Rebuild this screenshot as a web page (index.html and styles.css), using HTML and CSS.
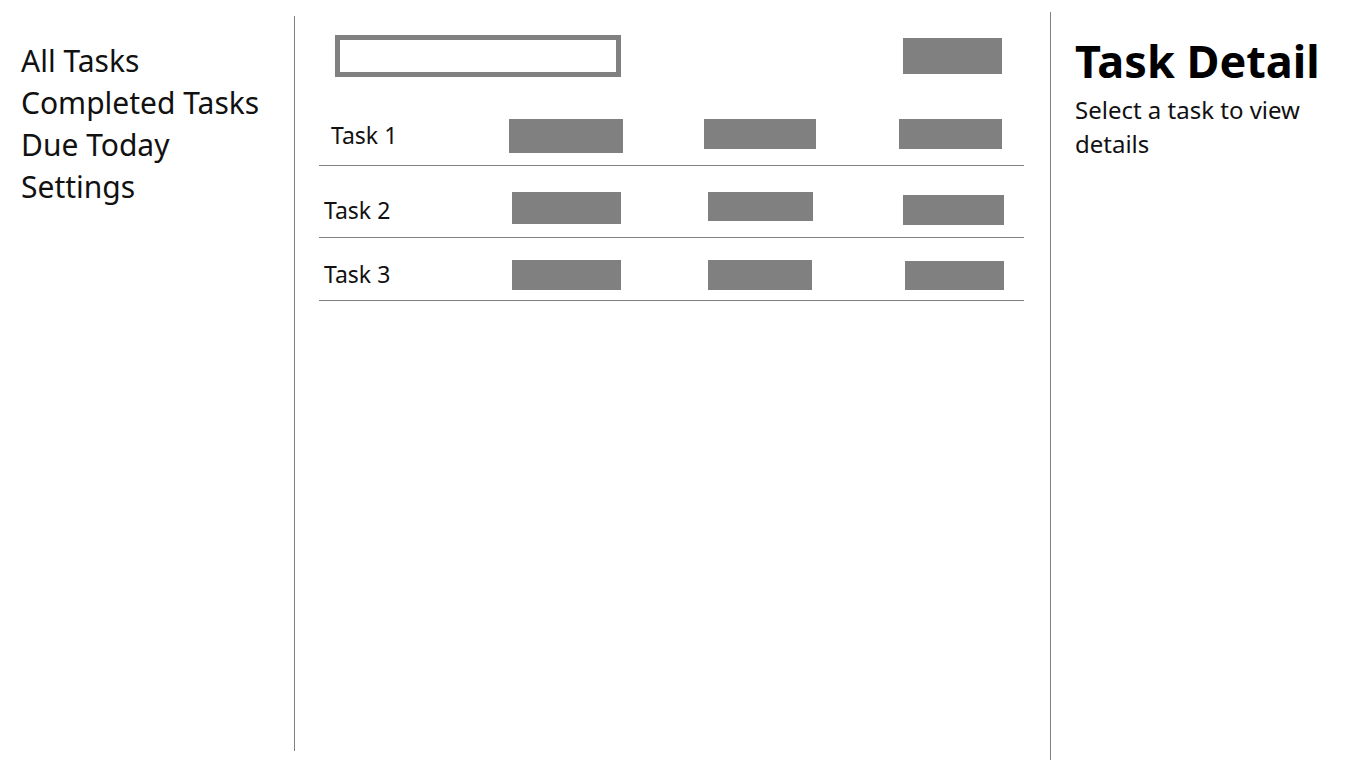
FILE: index.html
```html
<!DOCTYPE html>
<html lang="en">
  <head>
    <meta charset="UTF-8" />
    <meta name="viewport" content="width=device-width, initial-scale=1.0" />
    <title>Tasks</title>
    <link rel="stylesheet" href="styles.css">
  </head>
  <body>
    <div class="app">
      <!-- Navegación lateral -->
      <nav class="sidebar">
        <ul class="nav-list">
          <li>All Tasks</li>
          <li>Completed Tasks</li>
          <li>Due Today</li>
          <li>Settings</li>
        </ul>
      </nav>

      <!-- Lista de tareas -->
      <main class="task-list">
        <div class="toolbar">
          <input type="text" class="search" />
          <button class="add-btn"></button>
        </div>

        <div class="rows">
          <div class="task-row row-1">
            <span class="task-name">Task 1</span>
            <span class="bar bar-a"></span>
            <span class="bar bar-b"></span>
            <span class="bar bar-c"></span>
          </div>
          <div class="task-row row-2">
            <span class="task-name">Task 2</span>
            <span class="bar bar-a"></span>
            <span class="bar bar-b"></span>
            <span class="bar bar-c"></span>
          </div>
          <div class="task-row row-3">
            <span class="task-name">Task 3</span>
            <span class="bar bar-a"></span>
            <span class="bar bar-b"></span>
            <span class="bar bar-c"></span>
          </div>
        </div>
      </main>

      <!-- Detalle de la tarea -->
      <aside class="detail">
        <h1>Task Detail</h1>
        <p>Select a task to view details</p>
      </aside>
    </div>
  </body>
</html>
```

FILE: styles.css
```css
* {
  margin: 0;
  padding: 0;
  box-sizing: border-box;
}

body {
  font-family: "Noto Sans", "Open Sans", sans-serif;
  background-color: #ffffff;
  color: #111;
}

.app {
  display: flex;
  height: 768px;
}

/* Sidebar */
.sidebar {
  width: 295px;
  flex-shrink: 0;
  margin-top: 16px;
  height: 735px;
  border-right: 1px solid #808080;
  padding: 24px 0 0 21px;
}

.nav-list {
  list-style: none;
  font-size: 30px;
  line-height: 42px;
}

/* Middle column */
.task-list {
  width: 755px;
  flex-shrink: 0;
}

.toolbar {
  display: flex;
  justify-content: space-between;
  align-items: center;
  margin-top: 35px;
  padding: 0 48px 0 40px;
}

.search {
  width: 286px;
  height: 42px;
  border: 5px solid #808080;
  background: #fff;
  outline: none;
}

.add-btn {
  width: 99px;
  height: 36px;
  border: none;
  background-color: #808080;
}

.rows {
  margin: 28px 26px 0 24px;
}

.task-row {
  display: flex;
  align-items: flex-start;
  border-bottom: 1px solid #808080;
}

.task-name {
  font-size: 23px;
  line-height: 30px;
}

.bar {
  display: block;
  background-color: #808080;
}

/* Row 1 */
.row-1 {
  padding: 14px 0 12px 12px;
}

.row-1 .task-name {
  width: 178px;
  margin-top: 1px;
}

.row-1 .bar-a {
  width: 114px;
  height: 34px;
}

.row-1 .bar-b {
  width: 112px;
  height: 30px;
  margin-left: 81px;
}

.row-1 .bar-c {
  width: 103px;
  height: 30px;
  margin-left: 83px;
}

/* Row 2 */
.row-2 {
  padding: 26px 0 12px 5px;
}

.row-2 .task-name {
  width: 188px;
  margin-top: 3px;
  margin-bottom: -3px;
}

.row-2 .bar-a {
  width: 109px;
  height: 32px;
}

.row-2 .bar-b {
  width: 105px;
  height: 29px;
  margin-left: 87px;
}

.row-2 .bar-c {
  width: 101px;
  height: 30px;
  margin-left: 90px;
  margin-top: 3px;
}

/* Row 3 */
.row-3 {
  padding: 22px 0 10px 5px;
}

.row-3 .task-name {
  width: 188px;
  margin-top: -1px;
  margin-bottom: -3px;
}

.row-3 .bar-a {
  width: 109px;
  height: 30px;
}

.row-3 .bar-b {
  width: 104px;
  height: 30px;
  margin-left: 87px;
}

.row-3 .bar-c {
  width: 99px;
  height: 29px;
  margin-left: 93px;
  margin-top: 1px;
}

/* Detail panel */
.detail {
  flex: 1;
  margin-top: 12px;
  height: 748px;
  border-left: 1px solid #808080;
  padding: 19px 24px 0 24px;
}

.detail h1 {
  font-size: 45px;
  font-weight: 700;
  line-height: 60px;
  color: #000;
}

.detail p {
  font-size: 24px;
  line-height: 34px;
  margin-top: 2px;
}
```
